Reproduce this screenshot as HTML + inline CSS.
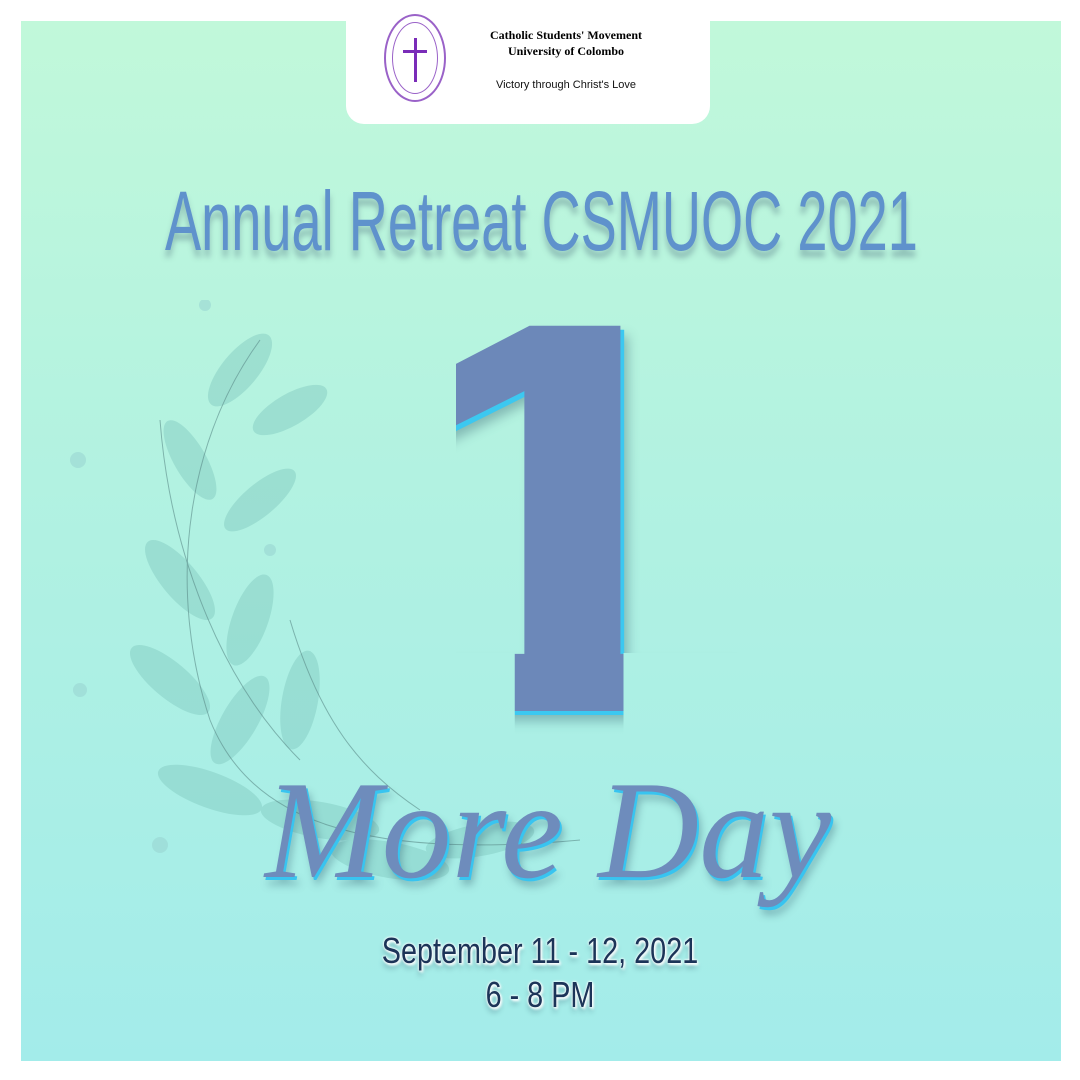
<!DOCTYPE html>
<html><head><meta charset="utf-8"><style>
html,body{margin:0;padding:0}
body{width:1080px;height:1080px;background:#fff;position:relative;overflow:hidden;font-family:"Liberation Sans",sans-serif}
.bg{position:absolute;left:21px;top:21px;width:1040px;height:1040px;background:linear-gradient(#c1f8da,#b0f1e2 50%,#a3ecea)}
.logo{position:absolute;left:346px;top:0;width:364px;height:124px;background:#fff;border-radius:0 0 18px 18px}
.seal{position:absolute;left:38px;top:14px;width:62px;height:88px;border:2px solid #9a62c8;border-radius:50%;box-sizing:border-box}
.seal:after{content:"";position:absolute;left:6px;top:6px;right:6px;bottom:6px;border:1px solid #9a62c8;border-radius:50%}
.cv{position:absolute;left:28px;top:22px;width:3px;height:44px;background:#7a2cb8}
.ch{position:absolute;left:17px;top:34px;width:24px;height:3px;background:#7a2cb8}
.t1{position:absolute;left:124px;top:27px;font:bold 12px "Liberation Serif",serif;color:#000;line-height:16px;text-align:center;width:192px}
.t2{position:absolute;left:124px;top:79px;font:11px "Liberation Sans",sans-serif;color:#111;width:192px;text-align:center}
.title{position:absolute;left:165px;top:173px;width:1400px;font:84px "Liberation Sans",sans-serif;color:#5f92cc;transform:scaleX(.645);transform-origin:0 0;white-space:nowrap;text-shadow:0 7px 7px rgba(60,90,110,.35)}
.one{position:absolute;left:361px;top:237px;font:bold 560px "Liberation Sans",sans-serif;color:#6c88b9;line-height:1;transform:scaleX(1.25);transform-origin:0 0;text-shadow:3px 4px 0 #3cc8f0,6px 10px 10px rgba(40,80,100,.35);clip-path:polygon(76px 0px,400px 0px,400px 416px,210px 416px,210px 600px,123px 600px,123px 416px,76px 416px)}
.more{position:absolute;left:265px;top:750px;font:italic 140px "Liberation Serif",serif;color:#6e8cbc;white-space:nowrap;text-shadow:2px 3px 0 #38c4f0,4px 8px 8px rgba(40,80,100,.35)}
.date{position:absolute;left:0;width:1080px;text-align:center;color:#1c3458;font-size:36px;transform:scaleX(.8);text-shadow:0 0 3px #fff,0 0 3px #fff,2px 2px 3px #fff,0 5px 6px rgba(40,80,100,.4)}
.leaf{position:absolute}
</style></head><body>
<div class="bg"></div>
<svg class="leaf" style="left:60px;top:300px" width="560" height="620" viewBox="0 0 560 620">
<g fill="#7fc8be" opacity=".45">
<ellipse cx="180" cy="70" rx="18" ry="45" transform="rotate(40 180 70)"/>
<ellipse cx="230" cy="110" rx="16" ry="42" transform="rotate(60 230 110)"/>
<ellipse cx="130" cy="160" rx="16" ry="45" transform="rotate(-30 130 160)"/>
<ellipse cx="200" cy="200" rx="16" ry="45" transform="rotate(50 200 200)"/>
<ellipse cx="120" cy="280" rx="18" ry="50" transform="rotate(-40 120 280)"/>
<ellipse cx="190" cy="320" rx="18" ry="48" transform="rotate(20 190 320)"/>
<ellipse cx="110" cy="380" rx="18" ry="50" transform="rotate(-50 110 380)"/>
<ellipse cx="180" cy="420" rx="18" ry="50" transform="rotate(30 180 420)"/>
<ellipse cx="150" cy="490" rx="18" ry="55" transform="rotate(-70 150 490)"/>
<ellipse cx="240" cy="400" rx="18" ry="50" transform="rotate(10 240 400)"/>
<ellipse cx="260" cy="520" rx="18" ry="60" transform="rotate(-80 260 520)"/>
<ellipse cx="330" cy="560" rx="18" ry="60" transform="rotate(-80 330 560)"/>
<ellipse cx="420" cy="540" rx="16" ry="55" transform="rotate(80 420 540)"/>
</g>
<g fill="none" stroke="#5a8a88" stroke-width="1" opacity=".6">
<path d="M200 40 C120 150 110 300 150 420 C190 520 300 560 520 540"/>
<path d="M100 120 C110 250 160 380 240 460"/>
<path d="M230 320 C260 420 300 470 360 510"/>
</g>
<g fill="#9ad6d2" opacity=".6"><circle cx="18" cy="160" r="8"/><circle cx="145" cy="5" r="6"/><circle cx="210" cy="250" r="6"/><circle cx="20" cy="390" r="7"/><circle cx="100" cy="545" r="8"/></g>
</svg>
<div class="logo">
<div class="seal"><div class="cv"></div><div class="ch"></div></div>
<div class="t1">Catholic Students' Movement<br>University of Colombo</div>
<div class="t2">Victory through Christ's Love</div>
</div>
<div class="title">Annual Retreat CSMUOC 2021</div>
<div class="one">1</div>
<div class="more">More Day</div>
<div class="date" style="top:930px">September 11 - 12, 2021</div>
<div class="date" style="top:974px">6 - 8 PM</div>
</body></html>
